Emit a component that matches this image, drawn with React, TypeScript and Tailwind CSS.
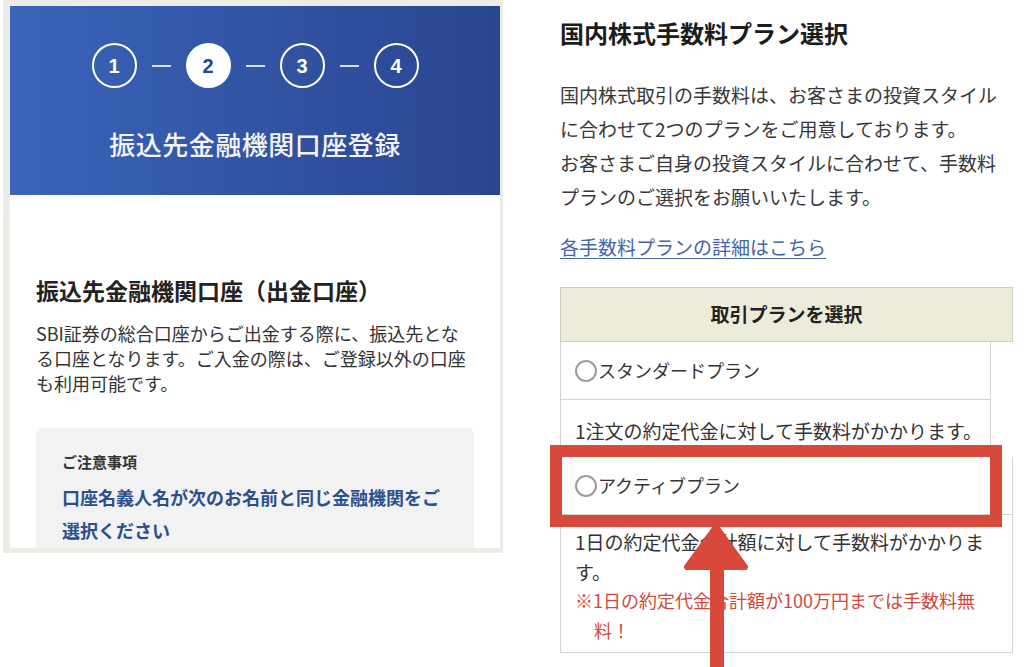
import { FC } from "react";

const steps = [1, 2, 3, 4];

const Stepper: FC<{ current: number }> = ({ current }) => (
  <div className="flex items-center">
    {steps.map((n, i) => (
      <div key={n} className="flex items-center">
        {i > 0 && <div className="mx-[15px] h-[2px] w-[19px] bg-white/80" />}
        <div
          className={
            n === current
              ? "flex h-[45px] w-[45px] items-center justify-center rounded-full border-2 border-white bg-white text-[20px] font-bold text-[#2a4690] font-['Liberation_Sans',sans-serif]"
              : "flex h-[45px] w-[45px] items-center justify-center rounded-full border-2 border-white text-[20px] font-bold text-white font-['Liberation_Sans',sans-serif]"
          }
        >
          {n}
        </div>
      </div>
    ))}
  </div>
);

const Radio: FC<{ label: string }> = ({ label }) => (
  <div className="flex items-center text-[18px] text-[#333]">
    <span className="h-[22px] w-[22px] rounded-full border-2 border-[#9c9c9c]" />
    <span className="ml-[1px]">{label}</span>
  </div>
);

const App: FC = () => {
  return (
    <div className="relative flex h-[667px] w-[1024px] items-start overflow-hidden bg-white font-['Noto_Sans_CJK_JP',sans-serif]">
      {/* left: bank account registration */}
      <div className="ml-[3px] h-[553px] w-[500px] shrink-0 bg-[#edede8] pb-[5px] pl-[7px] pr-[3px] pt-[6px]">
        <div className="flex h-full flex-col overflow-hidden bg-white">
          <div className="flex h-[189px] shrink-0 flex-col items-center bg-gradient-to-r from-[#3a64ba] to-[#29458f] pt-[37px]">
            <Stepper current={2} />
            <div className="mt-[38px] text-[26px] font-medium leading-[36px] tracking-[0.5px] text-[#f4f4f4]">
              振込先金融機関口座登録
            </div>
          </div>

          <div className="px-[26px] pt-[80px]">
            <h2 className="text-[23px] font-bold leading-[31px] text-[#222]">
              振込先金融機関口座（出金口座）
            </h2>
            <p className="mt-[15px] whitespace-nowrap text-[18px] leading-[25px] text-[#333]">
              SBI証券の総合口座からご出金する際に、振込先とな
              <br />
              る口座となります。ご入金の際は、ご登録以外の口座
              <br />
              も利用可能です。
            </p>

            <div className="mt-[32px] rounded-[6px] bg-[#f2f2f2] px-[26px] pb-[20px] pt-[23px]">
              <div className="text-[15px] font-bold leading-[22px] text-[#333]">ご注意事項</div>
              <p className="mt-[8px] whitespace-nowrap text-[18px] font-bold leading-[33px] text-[#2c4f8e]">
                口座名義人名が次のお名前と同じ金融機関をご
                <br />
                選択ください
              </p>
            </div>
          </div>
        </div>
      </div>

      {/* right: commission plan */}
      <div className="ml-[57px] w-[453px] shrink-0">
        <h1 className="mt-[16px] text-[24px] font-bold leading-[34px] text-[#1c1c1c]">
          国内株式手数料プラン選択
        </h1>
        <p className="mt-[28px] whitespace-nowrap text-[19px] leading-[34px] text-[#383838]">
          国内株式取引の手数料は、お客さまの投資スタイル
          <br />
          に合わせて2つのプランをご用意しております。
          <br />
          お客さまご自身の投資スタイルに合わせて、手数料
          <br />
          プランのご選択をお願いいたします。
        </p>
        <a className="mt-[16px] block text-[19px] leading-[34px] text-[#4465a6] underline underline-offset-[3px]">
          各手数料プランの詳細はこちら
        </a>

        <div className="relative mt-[23px]">
          <div className="flex h-[55px] items-center justify-center border border-[#cfcfc6] bg-[#edecdb] text-[19px] font-bold text-[#222]">
            取引プランを選択
          </div>
          <div className="flex h-[58px] w-[431px] items-center border-x border-b border-[#d4d4d4] bg-white pl-[14px]">
            <Radio label="スタンダードプラン" />
          </div>
          <div className="flex h-[57px] w-[431px] items-center border-x border-b border-[#d4d4d4] bg-white pl-[14px] pt-[6px] text-[19px] text-[#333]">
            1注文の約定代金に対して手数料がかかります。
          </div>
          <div className="flex h-[58px] items-center border-x border-b border-[#d4d4d4] bg-white pl-[14px]">
            <Radio label="アクティブプラン" />
          </div>
          <div className="h-[138px] border-x border-b border-[#d4d4d4] bg-white pl-[14px] pt-[12px] text-[19px] leading-[29.5px] text-[#333]">
            <p className="whitespace-nowrap">
              1日の約定代金合計額に対して手数料がかかりま
              <br />
              す。
            </p>
            <p className="whitespace-nowrap pl-[19px] indent-[-19px] text-[18px] text-[#d0493c]">
              ※1日の約定代金合計額が100万円までは手数料無
              <br />
              料！
            </p>
          </div>

          {/* annotation overlay */}
          <div className="absolute left-[-10px] top-[158px] h-[82px] w-[452px] border-[12px] border-[#d8483b]" />
          <svg
            className="absolute left-[123px] top-[237px]"
            width="66"
            height="150"
            viewBox="0 0 66 150"
          >
            <polygon
              points="33,3 4,43 62,43"
              fill="#d8483b"
              stroke="#d8483b"
              strokeWidth="6"
              strokeLinejoin="round"
            />
            <rect x="27" y="40" width="14" height="110" fill="#d8483b" />
          </svg>
        </div>
      </div>
    </div>
  );
};

export default App;
